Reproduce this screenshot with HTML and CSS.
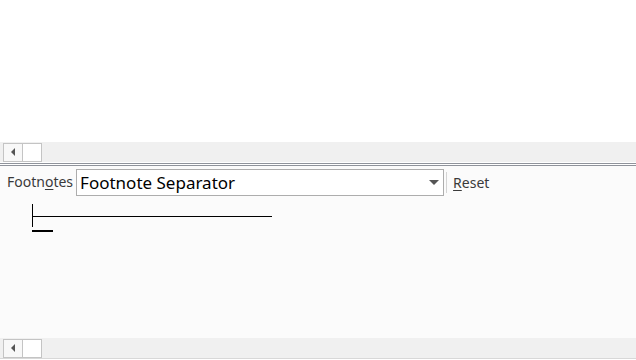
FILE: index.html
```html
<!DOCTYPE html>
<html>
<head>
<meta charset="utf-8">
<link rel="stylesheet" href="styles.css">
</head>
<body>
<div class="app">
  <div class="doc"></div>
  <div class="hscroll">
    <div class="sbtn left"><span class="tri"></span></div>
    <div class="sbtn"></div>
  </div>
  <div class="split"></div>
  <div class="panel">
    <div class="toolbar">
      <span class="label">Footn<u>o</u>tes</span>
      <div class="combo">
        <span class="combo-text">Footnote Separator</span>
        <span class="arrow"></span>
      </div>
      <span class="vsep"></span>
      <span class="reset"><u>R</u>eset</span>
    </div>
    <div class="preview">
      <svg width="300" height="40" viewBox="0 0 300 40" class="prev-svg">
        <rect x="32" y="7" width="1" height="23" fill="#000"/>
        <rect x="32" y="19" width="240" height="1" fill="#000"/>
        <rect x="32" y="33" width="21" height="2" fill="#000"/>
      </svg>
    </div>
  </div>
  <div class="hscroll bottom">
    <div class="sbtn left"><span class="tri"></span></div>
    <div class="sbtn"></div>
  </div>
  <div class="foot"></div>
</div>
</body>
</html>
```
FILE: styles.css
```css
html, body {
  margin: 0;
  padding: 0;
  width: 636px;
  height: 360px;
  overflow: hidden;
  background: #ffffff;
  font-family: "Noto Sans", "Open Sans", sans-serif;
}
.app {
  display: flex;
  flex-direction: column;
  height: 360px;
}
.doc {
  height: 142px;
  background: #ffffff;
}
.hscroll {
  height: 20px;
  background: #f0f0f0;
  display: flex;
  align-items: center;
  padding-left: 3px;
}
.sbtn {
  width: 18px;
  height: 17px;
  border: 1px solid #c4c4c4;
  background: #ffffff;
  box-sizing: content-box;
  display: flex;
  align-items: center;
  justify-content: center;
}
.sbtn.left {
  border-right: none;
  background: #f8f8f8;
}
.sbtn.left + .sbtn {
  border-left: 1px solid #c4c4c4;
}
.tri {
  width: 0;
  height: 0;
  border-top: 4px solid transparent;
  border-bottom: 4px solid transparent;
  border-right: 4px solid #555555;
}
.split {
  height: 1px;
  border-top: 1px solid #8f939b;
  border-bottom: 1px solid #8f939b;
  background: #ffffff;
  margin-top: 1px;
}
.panel {
  flex: 1;
  background: #fbfbfb;
  display: flex;
  flex-direction: column;
}
.toolbar {
  height: 31px;
  display: flex;
  align-items: center;
  padding-left: 7px;
}
.label {
  font-size: 14px;
  color: #3a3a3a;
  margin-right: 3px;
}
.label u, .reset u {
  text-underline-offset: 2px;
}
.combo {
  width: 359px;
  height: 25px;
  border: 1px solid #adadad;
  background: #ffffff;
  display: flex;
  align-items: center;
  justify-content: space-between;
  padding: 0 4px 0 3px;
  box-sizing: content-box;
  margin-top: 2px;
}
.combo-text {
  font-size: 17px;
  color: #000000;
}
.arrow {
  width: 0;
  height: 0;
  border-left: 5px solid transparent;
  border-right: 5px solid transparent;
  border-top: 5px solid #555555;
}
.vsep {
  width: 1px;
  height: 21px;
  background: #d4d4d4;
  margin-left: 2px;
  margin-top: 2px;
}
.reset {
  font-size: 14px;
  color: #3a3a3a;
  margin-left: 6px;
  margin-top: 2px;
}
.preview {
  flex: 1;
}
.prev-svg {
  display: block;
}
.hscroll.bottom {
  height: 20px;
}
.foot {
  height: 1px;
  background: #d8d8d8;
  margin-bottom: 1px;
}
```
